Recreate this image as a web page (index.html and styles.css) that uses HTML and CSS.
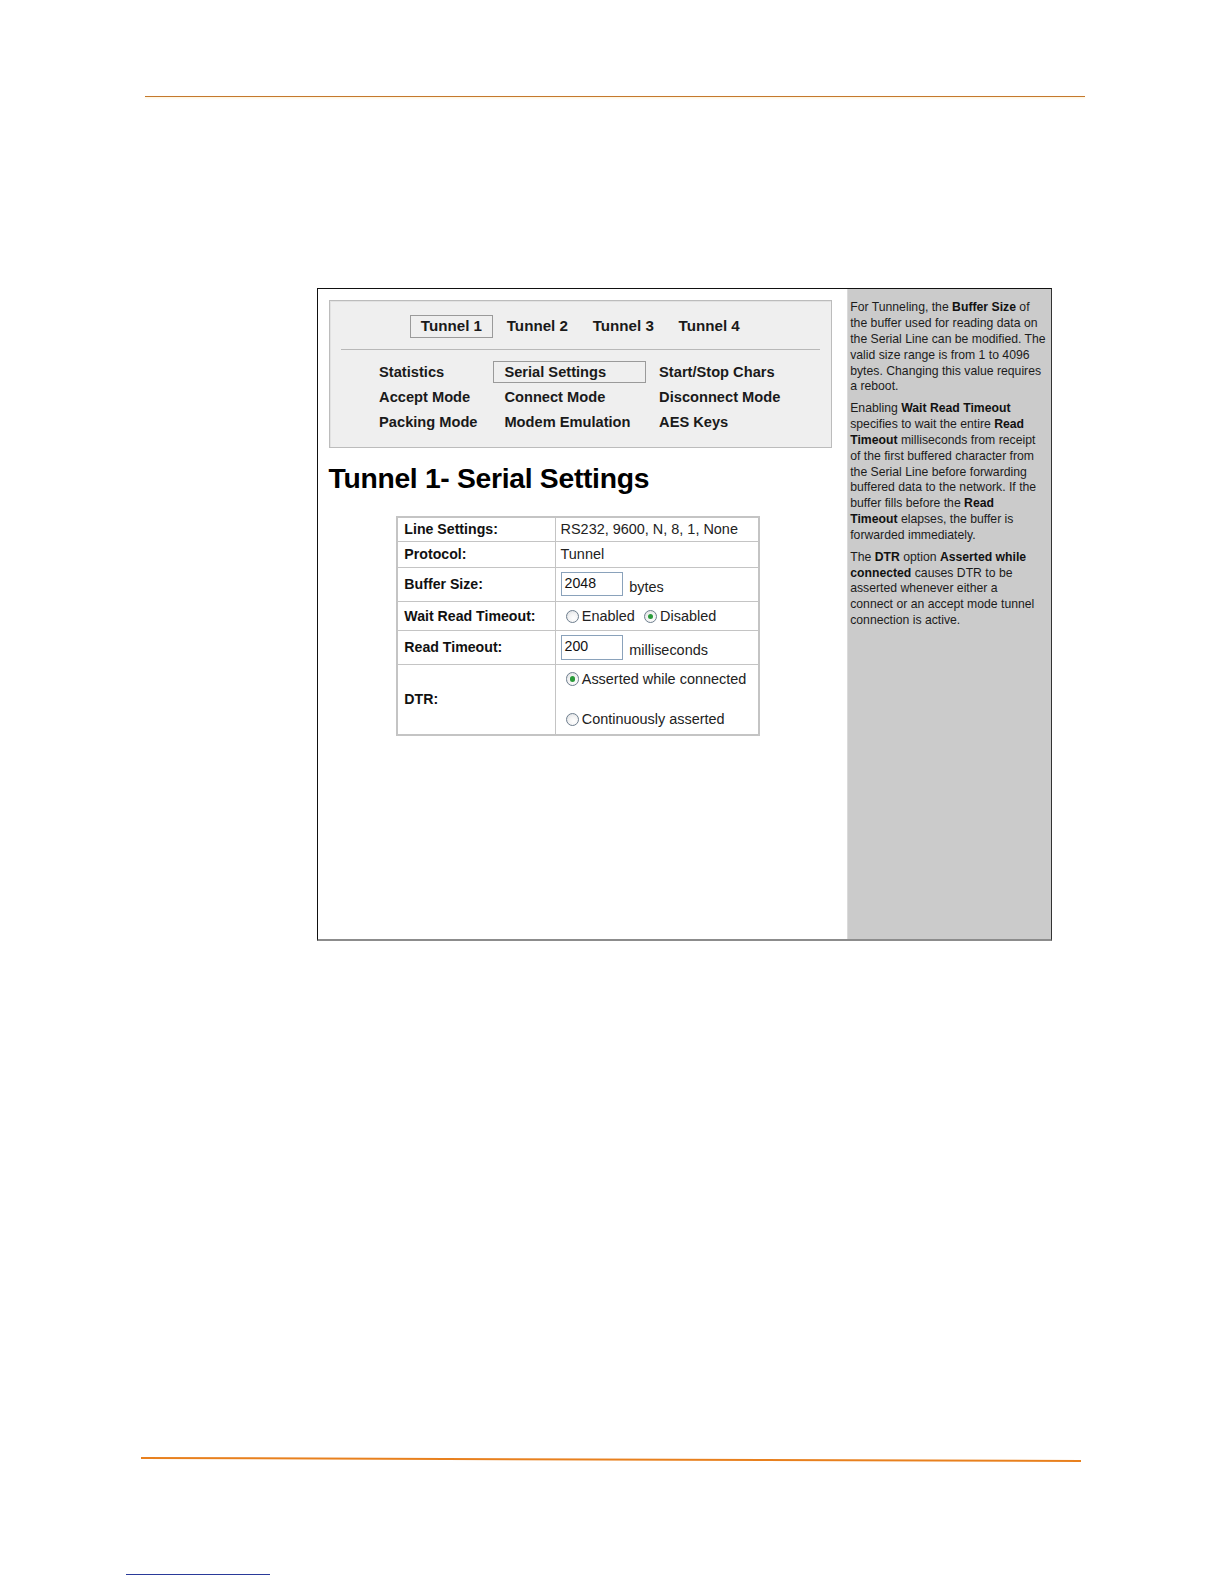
FILE: index.html
```html
<!DOCTYPE html>
<html>
<head>
<meta charset="utf-8">
<title>Tunnel 1 - Serial Settings</title>
<link rel="stylesheet" href="styles.css">
</head>
<body>
<div class="page">
  <div class="rule-top"></div>

  <div class="shot">
    <div class="main">
      <div class="nav">
        <div class="tabs">
          <span class="tab active">Tunnel 1</span>
          <span class="tab">Tunnel 2</span>
          <span class="tab">Tunnel 3</span>
          <span class="tab">Tunnel 4</span>
        </div>
        <div class="sep"></div>
        <div class="links">
          <span class="link">Statistics</span>
          <span class="link active">Serial Settings</span>
          <span class="link">Start/Stop Chars</span>
          <span class="link">Accept Mode</span>
          <span class="link">Connect Mode</span>
          <span class="link">Disconnect Mode</span>
          <span class="link">Packing Mode</span>
          <span class="link">Modem Emulation</span>
          <span class="link">AES Keys</span>
        </div>
      </div>

      <h1 class="title">Tunnel 1- Serial Settings</h1>

      <table class="settings">
        <tr class="r1">
          <td class="lbl">Line Settings:</td>
          <td class="val">RS232, 9600, N, 8, 1, None</td>
        </tr>
        <tr class="r2">
          <td class="lbl">Protocol:</td>
          <td class="val">Tunnel</td>
        </tr>
        <tr class="r3">
          <td class="lbl">Buffer Size:</td>
          <td class="val"><div class="inline"><span class="field">2048</span><span class="unit">bytes</span></div></td>
        </tr>
        <tr class="r4">
          <td class="lbl">Wait Read Timeout:</td>
          <td class="val"><div class="inline">
            <span class="radio"></span><span class="opt">Enabled</span>
            <span class="radio on"></span><span class="opt">Disabled</span>
          </div></td>
        </tr>
        <tr class="r5">
          <td class="lbl">Read Timeout:</td>
          <td class="val"><div class="inline"><span class="field">200</span><span class="unit">milliseconds</span></div></td>
        </tr>
        <tr class="r6">
          <td class="lbl">DTR:</td>
          <td class="val">
            <div class="stack">
              <div class="inline"><span class="radio on"></span><span class="opt">Asserted while connected</span></div>
              <div class="inline"><span class="radio"></span><span class="opt">Continuously asserted</span></div>
            </div>
          </td>
        </tr>
      </table>
    </div>

    <div class="help">
      <p>For Tunneling, the <b>Buffer Size</b> of<br>the buffer used for reading data on<br>the Serial Line can be modified. The<br>valid size range is from 1 to 4096<br>bytes. Changing this value requires<br>a reboot.</p>
      <p>Enabling <b>Wait Read Timeout</b><br>specifies to wait the entire <b>Read</b><br><b>Timeout</b> milliseconds from receipt<br>of the first buffered character from<br>the Serial Line before forwarding<br>buffered data to the network. If the<br>buffer fills before the <b>Read</b><br><b>Timeout</b> elapses, the buffer is<br>forwarded immediately.</p>
      <p>The <b>DTR</b> option <b>Asserted while</b><br><b>connected</b> causes DTR to be<br>asserted whenever either a<br>connect or an accept mode tunnel<br>connection is active.</p>
    </div>
  </div>

  <div class="rule-bottom"></div>
  <div class="foot-rule"></div>
</div>
</body>
</html>
```

FILE: styles.css
```css
* { box-sizing: border-box; }

html, body {
  margin: 0;
  padding: 0;
  background: #ffffff;
  width: 1224px;
  height: 1584px;
  overflow: hidden;
}

body {
  font-family: "Liberation Sans", Arial, sans-serif;
  color: #111;
}

.page {
  zoom: 1.011;
  width: 1224px;
  height: 1584px;
  padding-top: 95px;
  overflow: hidden;
}

.rule-top {
  margin-left: 143px;
  width: 930px;
  height: 1px;
  background: #c4782e;
  box-shadow: 0 1px 2px #ffedc4;
}

.shot {
  margin-top: 189px;
  margin-left: 314px;
  width: 727px;
  height: 646px;
  display: flex;
  border-top: 1px solid #111;
  border-left: 1px solid #111;
  border-right: 1px solid #333;
  border-bottom: 2px solid #8c8c8c;
}

.main {
  width: 523px;
  padding-top: 11px;
  padding-left: 10px;
}

.nav {
  width: 498px;
  height: 146px;
  background: #efefef;
  border: 1px solid #bcbcbc;
  box-shadow: inset 1px 1px 0 #e2e2e2;
  padding: 14px 11px 0 11px;
}

.tabs {
  display: flex;
  justify-content: center;
  gap: 3px;
}

.tab, .link {
  font-size: 14.5px;
  font-weight: bold;
  color: #1a1a1a;
  height: 22px;
  line-height: 20px;
  padding: 0 9px;
  border: 1px solid transparent;
  white-space: nowrap;
}

.tab {
  font-size: 15px;
  width: 82px;
  text-align: center;
}

.tab.active, .link.active {
  border-color: #9a9a9a;
}

.sep {
  margin-top: 11px;
  height: 1px;
  background: #b8b8b8;
}

.links {
  margin-top: 11px;
  margin-left: 27px;
  display: grid;
  grid-template-columns: 122px 151px auto;
  column-gap: 2px;
  row-gap: 3px;
}

.link {
  padding: 0 10px;
}

.title {
  margin: 14px 0 0 0;
  font-size: 28px;
  line-height: 32px;
  font-weight: bold;
  color: #000;
  letter-spacing: -0.3px;
}

.settings {
  margin-top: 21px;
  margin-left: 67px;
  border-collapse: collapse;
  border: 2px solid #c4c4c4;
  font-size: 14px;
  width: 360px;
}

.settings td {
  border: 1px solid #c4c4c4;
  padding: 0;
  vertical-align: middle;
  white-space: nowrap;
}

.settings .lbl {
  width: 156px;
  padding-left: 6px;
  font-weight: bold;
  color: #111;
}

.settings .val {
  padding-left: 5px;
  color: #222;
  font-size: 14.3px;
}

.r1, .r2 { height: 25px; }
.r3 { height: 34px; }
.r4 { height: 29px; }
.r5 { height: 33px; }
.r6 { height: 70px; }

.inline {
  display: flex;
  align-items: center;
}

.field {
  display: inline-block;
  width: 62px;
  height: 24px;
  border: 1px solid #8aa2bb;
  padding: 1px 3px 0 3px;
  line-height: 18px;
  font-size: 14px;
  color: #111;
  background: #fff;
}

.unit {
  margin-left: 6px;
  padding-top: 5px;
}

.radio {
  display: inline-block;
  width: 13px;
  height: 13px;
  border-radius: 50%;
  border: 1px solid #6f7f8f;
  background: radial-gradient(circle at 60% 65%, #ffffff 0, #f4f4f4 45%, #d6d9dc 100%);
  margin-left: 5px;
  margin-right: 3px;
  position: relative;
  flex: none;
}

.radio.on::after {
  content: "";
  position: absolute;
  left: 3px;
  top: 3px;
  width: 5px;
  height: 5px;
  border-radius: 50%;
  background: #2a9a3a;
}

.opt + .radio {
  margin-left: 9px;
}

.stack {
  display: flex;
  flex-direction: column;
  gap: 20px;
  line-height: 20px;
}

.help {
  flex: 1;
  background: #cbcbcb;
  border-left: 1px solid #dadada;
  padding: 11px 0 0 2px;
  font-size: 12.1px;
  line-height: 15.65px;
  color: #1c1c1c;
  white-space: nowrap;
}

.help p {
  margin: 0 0 6px 0;
}

.help b {
  color: #111;
}

.rule-bottom {
  margin-top: 510px;
  margin-left: 139px;
  width: 930px;
  height: 2px;
  background: #e8801e;
  transform: rotate(0.18deg);
  transform-origin: left center;
}

.foot-rule {
  margin-top: 114px;
  margin-left: 125px;
  width: 142px;
  height: 1px;
  background: #2a3a9a;
}
```
